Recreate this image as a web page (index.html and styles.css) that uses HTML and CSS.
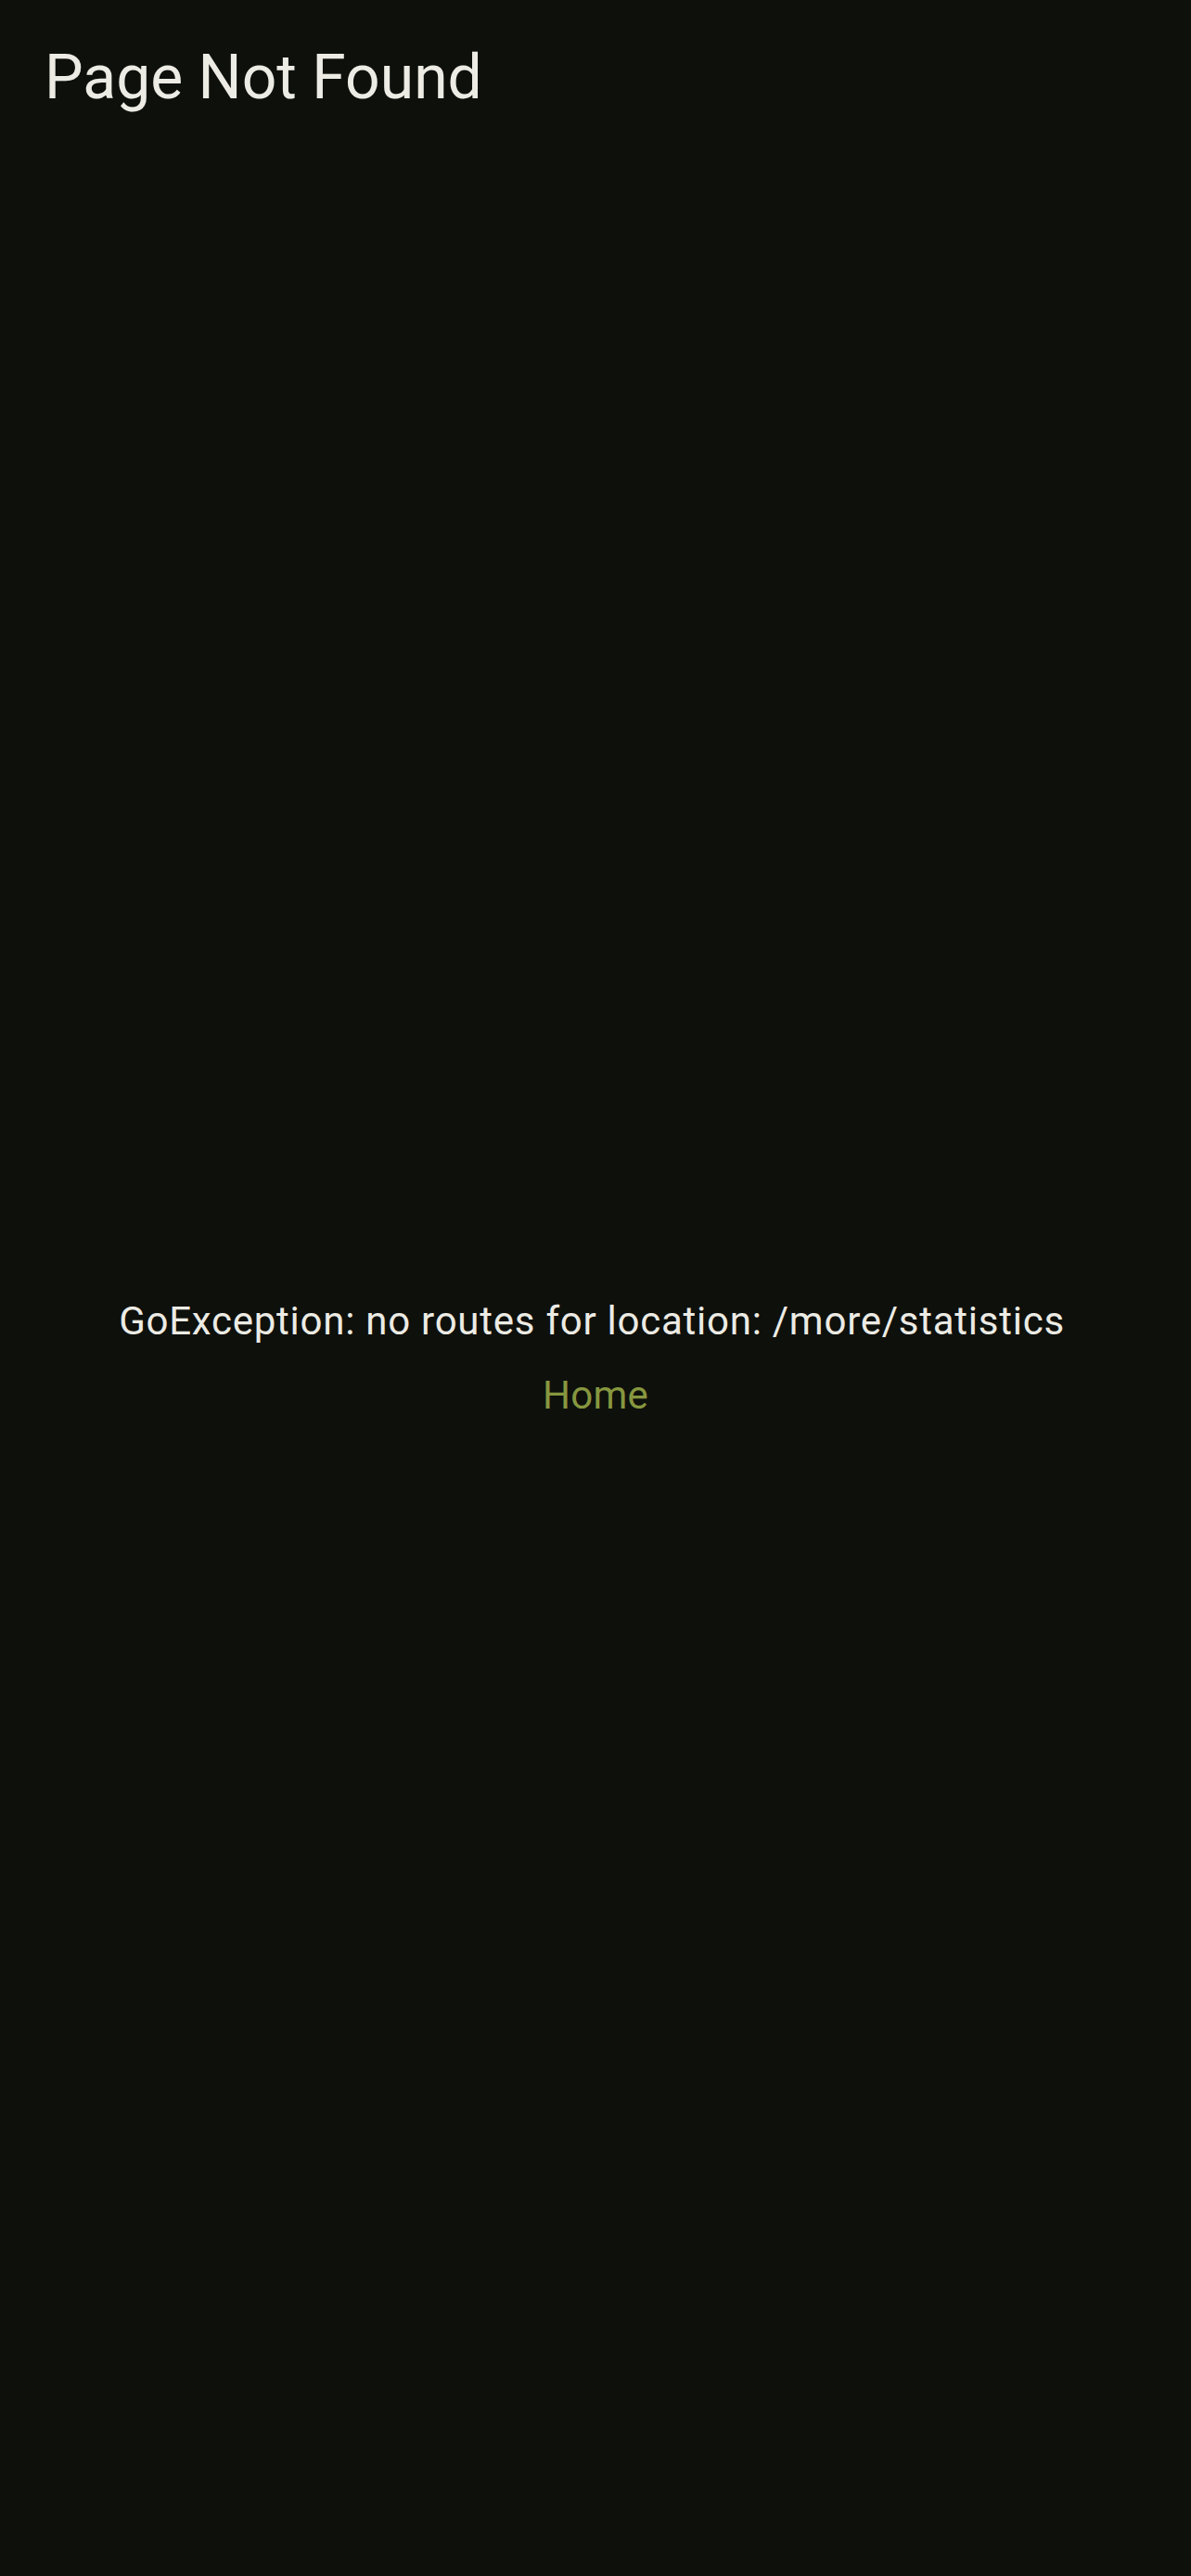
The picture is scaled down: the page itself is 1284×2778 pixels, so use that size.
FILE: index.html
```html
<!DOCTYPE html>
<html lang="en">
<head>
<meta charset="utf-8">
<title>Page Not Found</title>
<link rel="stylesheet" href="styles.css">
</head>
<body>
<div class="screen">
  <header class="app-bar">
    <h1 class="app-bar-title">Page Not Found</h1>
  </header>
  <main class="content">
    <p class="error-text">GoException: no routes for location: /more/statistics</p>
    <a class="home-button" href="#">Home</a>
  </main>
</div>
</body>
</html>
```

FILE: styles.css
```css
html, body {
  margin: 0;
  padding: 0;
  background: #0e100c;
}

body {
  font-family: Roboto, "Noto Sans", "Liberation Sans", sans-serif;
  color: #ecebe4;
}

.screen {
  display: flex;
  flex-direction: column;
  width: 1284px;
  height: 2778px;
  background: #0e100c;
}

.app-bar {
  height: 168px;
  display: flex;
  align-items: center;
  padding: 0 48px;
  flex-shrink: 0;
}

.app-bar-title {
  margin: 0;
  font-size: 66px;
  line-height: 84px;
  font-weight: 400;
  color: #ecebe4;
}

.content {
  flex: 1;
  display: flex;
  flex-direction: column;
  align-items: center;
  justify-content: center;
}

.error-text {
  margin: 0;
  padding-right: 8px;
  font-size: 42px;
  line-height: 60px;
  letter-spacing: 0.75px;
  text-align: center;
  color: #ecebe4;
}

.home-button {
  display: block;
  padding: 20px 36px 16px;
  font-size: 42px;
  line-height: 60px;
  font-weight: 400;
  letter-spacing: 0.3px;
  color: #87973f;
  text-decoration: none;
}
```
